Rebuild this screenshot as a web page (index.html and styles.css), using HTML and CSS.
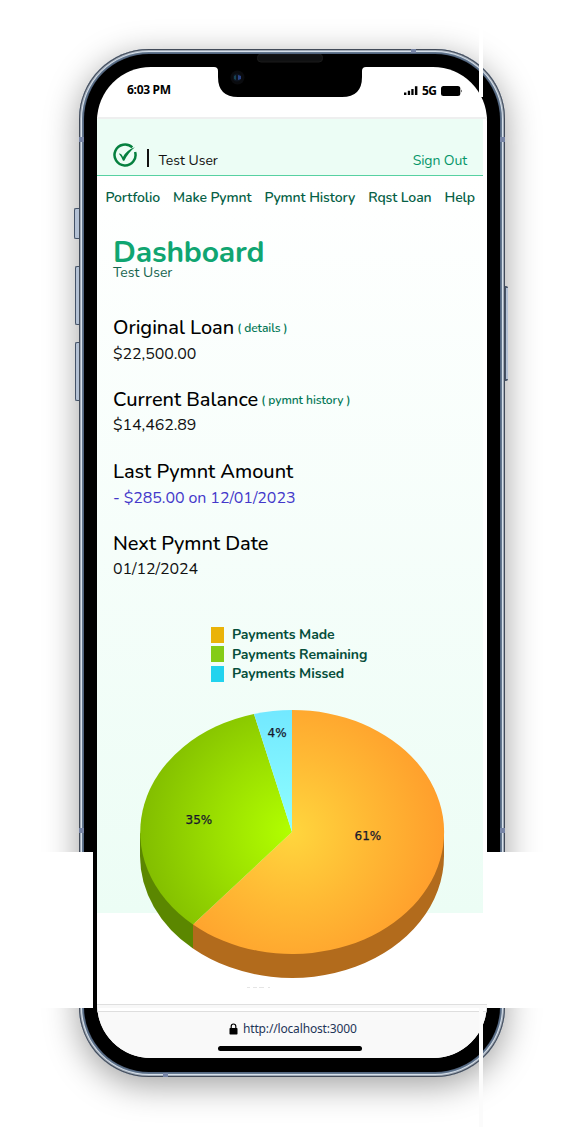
FILE: index.html
```html
<!DOCTYPE html>
<html lang="en">
<head>
<meta charset="utf-8">
<title>Dashboard</title>
<link rel="stylesheet" href="styles.css">
</head>
<body>
<div class="stage">
  <div class="phone">
    <i class="key mute"></i><i class="key up"></i><i class="key down"></i><i class="key power"></i>
    <i class="seam s1"></i><i class="seam s2"></i><i class="seam s3"></i><i class="seam s4"></i><i class="seam s5"></i><i class="seam s6"></i>
    <div class="bezel">
      <div class="screen">
        <div class="status">
          <span class="time">6:03 PM</span>
          <span class="signal">
            <svg width="14" height="10" viewBox="0 0 14 10"><path d="M0 6.5h2.4V9H0zM3.8 4.8h2.3V9H3.800zM7.300 3h2.300v6H7.300zM10.900 .2h2.500V9h-2.500z"/></svg>
            <b class="net">5G</b>
            <svg width="22" height="12" viewBox="0 0 22 12"><rect x="0" y="1" width="19.300" height="10" rx="2.500"/><path d="M20 4.500q1.500 1.500 0 3z"/></svg>
          </span>
        </div>
        <div class="app">
          <header class="header">
            <svg class="logo" width="24" height="24" viewBox="0 0 24 24"><path d="M19.300 4.400A10.500 10.500 0 1 0 22.100 9" fill="none" stroke="#06803f" stroke-width="2.500"/><path d="M5.800 10.500q2.500-.300 4.200 3.400Q13.700 7 21.900 4.300 15.400 9.500 11.300 17.700H10Q8.300 13.500 5.800 10.500z" fill="#06803f"/></svg>
            <i class="bar"></i>
            <span class="user">Test User</span>
            <a class="signout">Sign Out</a>
          </header>
          <main class="content">
            <nav class="nav"><a>Portfolio</a><a>Make Pymnt</a><a>Pymnt History</a><a>Rqst Loan</a><a>Help</a></nav>
            <h1 class="title">Dashboard</h1>
            <p class="subtitle">Test User</p>
            <section class="item"><h2><span>Original Loan</span><a>( details )</a></h2><p class="value low">$22,500.00</p></section>
            <section class="item"><h2><span>Current Balance</span><a>( pymnt history )</a></h2><p class="value">$14,462.89</p></section>
            <section class="item"><h2><span>Last Pymnt Amount</span></h2><p class="value low paid">- $285.00 on 12/01/2023</p></section>
            <section class="item"><h2><span>Next Pymnt Date</span></h2><p class="value">01/12/2024</p></section>
            <ul class="legend">
              <li><i class="made"></i><span>Payments Made</span></li>
              <li><i class="remaining"></i><span>Payments Remaining</span></li>
              <li><i class="missed"></i><span>Payments Missed</span></li>
            </ul>
            <svg class="pie" width="306" height="284" viewBox="139 708 306 284">
              <defs>
                <radialGradient id="o" gradientUnits="userSpaceOnUse" cx="292" cy="832" r="152"><stop offset="0" stop-color="#ffd63d"/><stop offset=".5" stop-color="#ffb934"/><stop offset="1" stop-color="#ff9e2c"/></radialGradient>
                <radialGradient id="g" gradientUnits="userSpaceOnUse" cx="292" cy="832" r="152"><stop offset="0" stop-color="#b2ff00"/><stop offset=".5" stop-color="#9bdf00"/><stop offset="1" stop-color="#82bd00"/></radialGradient>
                <linearGradient id="c" x1="0" y1="0" x2="0" y2="1"><stop offset="0" stop-color="#72e8ff"/><stop offset="1" stop-color="#8fffff"/></linearGradient>
              </defs>
              <path d="M140 832V856A152 122 0 0 0 193 948.500V924z" fill="#5b8700"/>
              <path d="M193 924V948.500A152 122 0 0 0 444 856V832z" fill="#b26b1c"/>
              <path d="M292 832V710A152 122 0 1 1 193 924.500z" fill="url(#o)"/>
              <path d="M292 832L193 924.500A152 122 0 0 1 254 714z" fill="url(#g)"/>
              <path d="M292 832L254 714Q273 710 292 710z" fill="url(#c)"/>
              <g class="pct"><text x="267.500" y="737">4%</text><text x="185.500" y="824">35%</text><text x="354.500" y="840">61%</text></g>
              <path d="M247 987.500h3m3 0h4m2 0h5m4 0h2" stroke="#e5e5e5"/>
            </svg>
          </main>
        </div>
        <div class="gap"></div>
        <footer class="browser">
          <div class="address"><svg width="9" height="12" viewBox="0 0 9 12"><path d="M2.200 5V3.300a2.200 2.200 0 0 1 4.600 0V5" fill="none" stroke="#000" stroke-width="1.200"/><rect x=".5" y="5" width="8" height="6.500" rx=".7"/></svg><span>http://localhost:3000</span></div>
          <i class="home"></i>
        </footer>
      </div>
    </div>
    <svg class="notch" width="152" height="43" viewBox="214 54 152 43"><path d="M214 67V54h152v13q-4 0-4 4v6q0 20-20 20H238q-20 0-20-20v-6q0-4-4-4z"/><rect x="257.500" y="54" width="65" height="8" rx="3.500" fill="#101112" stroke="#1b1b1b"/><circle cx="237.500" cy="77.500" r="7" fill="#0a0b0e"/><circle cx="237" cy="77.500" r="4" fill="#0d1420"/><path d="M234 76l2-1v5l-2-1z" fill="#174252"/><path d="M238 75l3 1v3l-3 1z" fill="#294285"/></svg>
  </div>
  <i class="mask left"></i><i class="mask right"></i><i class="strip top"></i><i class="strip bottom"></i>
</div>
</body>
</html>
```

FILE: styles.css
```css
* { box-sizing: border-box; }
body { margin: 0; background: #fff; }
h1, h2, p, ul { margin: 0; padding: 0; list-style: none; }
i { display: block; }
svg { display: block; }
.stage { position: relative; width: 581px; height: 1127px; padding: 49px 76px 0 79px; overflow: hidden; font-family: Nunito, Lato, sans-serif; }
.phone { position: relative; width: 426px; height: 1028px; border-radius: 70px; padding: 5px; background: #536680; box-shadow: inset 0 0 0 1px #424b59, inset 0 0 0 2px #a0aab7, inset 0 0 0 3px #d7e0ea, inset 0 0 0 4px #64788f, 0 8px 34px rgba(0,0,0,.38); }
.bezel { width: 416px; height: 1018px; padding: 13px; background: #000; border-radius: 65px; }
.screen { width: 390px; height: 991px; background: #fff; border-radius: 54px; overflow: hidden; }
.status { display: flex; justify-content: space-between; height: 52px; padding: 15px 24px 0 30px; border-bottom: 2px solid #eeefef; }
.time, .net { font: bold 12px/16px "Noto Sans", sans-serif; letter-spacing: -.3px; }
.signal { display: flex; align-items: center; height: 17px; }
.net { margin: 0 4px 0 4px; width: 15px; letter-spacing: -.5px; }
.app { width: 386px; height: 794px; }
.header { display: flex; align-items: center; height: 57px; padding: 16px 16px 0; background: #ecfdf5; border-bottom: 1px solid #57d1a2; }
.bar { width: 2px; height: 18px; margin: 5px 10px 0 9.500px; background: #111; }
.user { font-size: 14px; margin-top: 10px; color: #111; }
.signout { margin: 10px 0 0 auto; font-size: 14px; letter-spacing: -.1px; color: #059669; }
.content { height: 737px; padding: 0 16px; background: linear-gradient(#fff, #ecfdf5); }
.nav { display: flex; justify-content: space-between; margin: 0 -8px 0 -7.500px; height: 56px; padding-top: 12px; font-size: 14px; font-weight: 600; letter-spacing: -.1px; line-height: 19px; white-space: nowrap; color: #065f46; }
.title { height: 32px; padding-top: 6px; font-size: 30px; line-height: 26px; line-height: 30px; font-weight: 700; letter-spacing: -.15px; color: #10a571; }
.subtitle { height: 49px; font-size: 14px; line-height: 17px; color: #17644e; }
.item { height: 72px; }
.item h2 { display: flex; gap: 3px; align-items: center; height: 28px; font-size: 20px; font-weight: 500; letter-spacing: -.03px; white-space: nowrap; color: #000; }
.item h2 a { font-size: 12px; font-weight: 600; letter-spacing: -.06px; color: #047857; padding-top: 1px; }
.value { font-size: 16px; line-height: 25px; letter-spacing: -.08px; color: #111; }
.low { padding-top: 1px; }
.paid { color: #4338ca; }
.legend { height: 84px; padding: 24px 0 0 98px; }
.legend li { display: flex; align-items: center; gap: 8px; height: 19.600px; font-size: 14px; font-weight: 700; letter-spacing: -.08px; color: #064e3b; white-space: nowrap; }
.legend i { width: 13px; height: 16px; }
.made { background: #eab308; }
.remaining { background: #84cc16; }
.missed { background: #22d3ee; }
.pie { position: relative; z-index: 1; margin: 23px 0 0 26px; overflow: visible; }
.pct { font: 12px "DejaVu Sans", sans-serif; fill: #17172c; stroke: #17172c; stroke-width: .25px; }
.gap { height: 98px; background: linear-gradient(#fff 91px, #dfdfdf 91px 92px, #f8f8f8 92px 95px, #fff 95px 98px); }
.browser { height: 47px; background: #f9f9f9; border-top: 1px solid #dedede; }
.address { display: flex; align-items: center; gap: 5px; height: 33px; padding-left: 132px; font: 12px "Noto Sans", sans-serif; letter-spacing: -.16px; color: #1e3558; }
.home { width: 144px; height: 5px; margin: .5px 0 0 121px; border-radius: 3px; background: #000; }
.notch { position: absolute; left: 135px; top: 5px; }
.key { position: absolute; width: 4px; background: #b4c1d4; border: solid #455368; border-width: 1px 0 1px 1px; border-radius: 2px 0 0 2px; }
.mute { left: -5px; width: 5px; top: 159px; height: 31px; }
.up { left: -4px; top: 217px; height: 59px; }
.down { left: -4px; top: 293px; height: 59px; }
.power { left: 426px; top: 237px; height: 95px; width: 3px; border-width: 2px 0 2px 1px; border-radius: 0 2px 2px 0; }
.seam { position: absolute; width: 5px; height: 5px; background: #7785a6; }
.s1 { left: 0; top: 88px; }
.s2 { right: 0; top: 88px; }
.s3 { right: 89px; top: 0; height: 4px; }
.s4 { left: 0; top: 779px; }
.s5 { right: 0; top: 779px; }
.s6 { left: 84px; bottom: 0; height: 4px; }
.mask, .strip { position: absolute; background: #fff; }
.mask { top: 852px; height: 156px; }
.left { left: 0; width: 93px; }
.right { left: 487px; width: 94px; }
.strip { left: 479px; width: 4px; }
.top { top: 0; height: 97px; }
.bottom { top: 1008px; height: 119px; background: #fbfbfb; }
```
